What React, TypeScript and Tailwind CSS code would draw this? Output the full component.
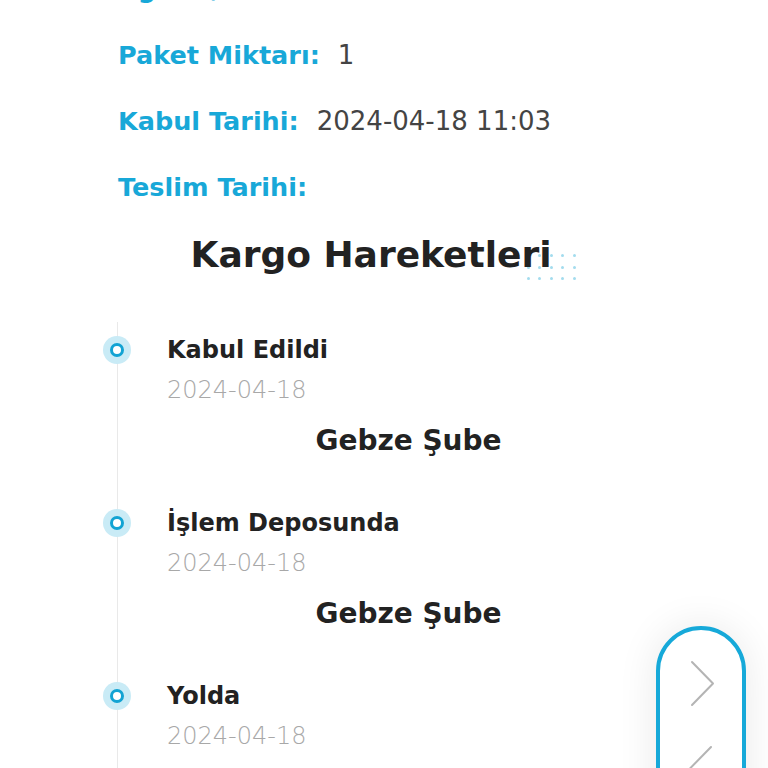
const info = [
  { label: "Ağırlık/Desi:", value: "1" },
  { label: "Paket Miktarı:", value: "1" },
  { label: "Kabul Tarihi:", value: "2024-04-18 11:03" },
  { label: "Teslim Tarihi:", value: "" },
];

const moves = [
  { status: "Kabul Edildi", date: "2024-04-18", place: "Gebze Şube" },
  { status: "İşlem Deposunda", date: "2024-04-18", place: "Gebze Şube" },
  { status: "Yolda", date: "2024-04-18", place: "Gebze Şube" },
];

function Dots() {
  return (
    <div className="absolute right-[-24px] top-[21px] grid grid-cols-5 gap-x-[8.5px] gap-y-[8.5px]">
      {Array.from({ length: 15 }).map((_, i) => (
        <span key={i} className="block w-[3px] h-[3px] rounded-full bg-[#a3dcee]" />
      ))}
    </div>
  );
}

function Chevron({ left = false }: { left?: boolean }) {
  return (
    <svg width="26" height="50" viewBox="0 0 26 50" fill="none" className={left ? "rotate-180" : ""}>
      <path d="M3 3 L24 24.5 L3 46" stroke="#b4b4b4" strokeWidth="2" strokeLinecap="round" strokeLinejoin="round" />
    </svg>
  );
}

export default function App() {
  return (
    <div className="relative w-[768px] h-[768px] overflow-hidden bg-white font-['DejaVu_Sans','Liberation_Sans',sans-serif]">
      {/* kargo bilgileri */}
      <div className="-mt-[44px] pl-[118px]">
        {info.map((row) => (
          <div key={row.label} className="h-[66px] flex items-center gap-[18px]">
            <span className="text-[25.5px] font-bold text-[#18a8d8]">{row.label}</span>
            <span className="text-[26px] text-[#444]">{row.value}</span>
          </div>
        ))}
      </div>

      <div className="h-[70px] flex items-center justify-center mr-[26px]">
        <div className="relative">
          <Dots />
          <h2 className="relative text-[36px] leading-[44px] font-bold text-[#222]">Kargo Hareketleri</h2>
        </div>
      </div>

      {/* hareketler */}
      <div className="ml-[117px] mt-[32px] border-l-[1.5px] border-[#e9e9e9] pr-[118px]">
        <div className="pt-[11px]">
          {moves.map((m) => (
            <div key={m.status} className="relative pl-[49px] pb-[47px]">
              <div className="absolute left-[-15px] top-[3px] w-[28px] h-[28px] rounded-full bg-[#c9ebf6] flex items-center justify-center">
                <div className="w-[14px] h-[14px] rounded-full border-[3.5px] border-[#12a3d3] bg-white" />
              </div>
              <div className="h-[34px] flex items-center text-[24px] font-bold text-[#222]">{m.status}</div>
              <div className="mt-[7px] h-[32px] flex items-center text-[24px] font-extralight text-[#a8a8a8]">{m.date}</div>
              <div className="mt-[17px] h-[36px] flex items-center justify-center text-[28px] font-bold text-[#222]">
                {m.place}
              </div>
            </div>
          ))}
        </div>
      </div>

      {/* kaydırma düğmesi */}
      <div className="absolute left-[656px] top-[626px] w-[90px] h-[220px] rounded-full border-[4px] border-[#16a9d9] bg-white shadow-[0_0_40px_rgba(0,0,0,0.09)] flex flex-col items-center pt-[29px] gap-[34px]">
        <div className="ml-[1px]">
          <Chevron />
        </div>
        <Chevron left />
      </div>
    </div>
  );
}
